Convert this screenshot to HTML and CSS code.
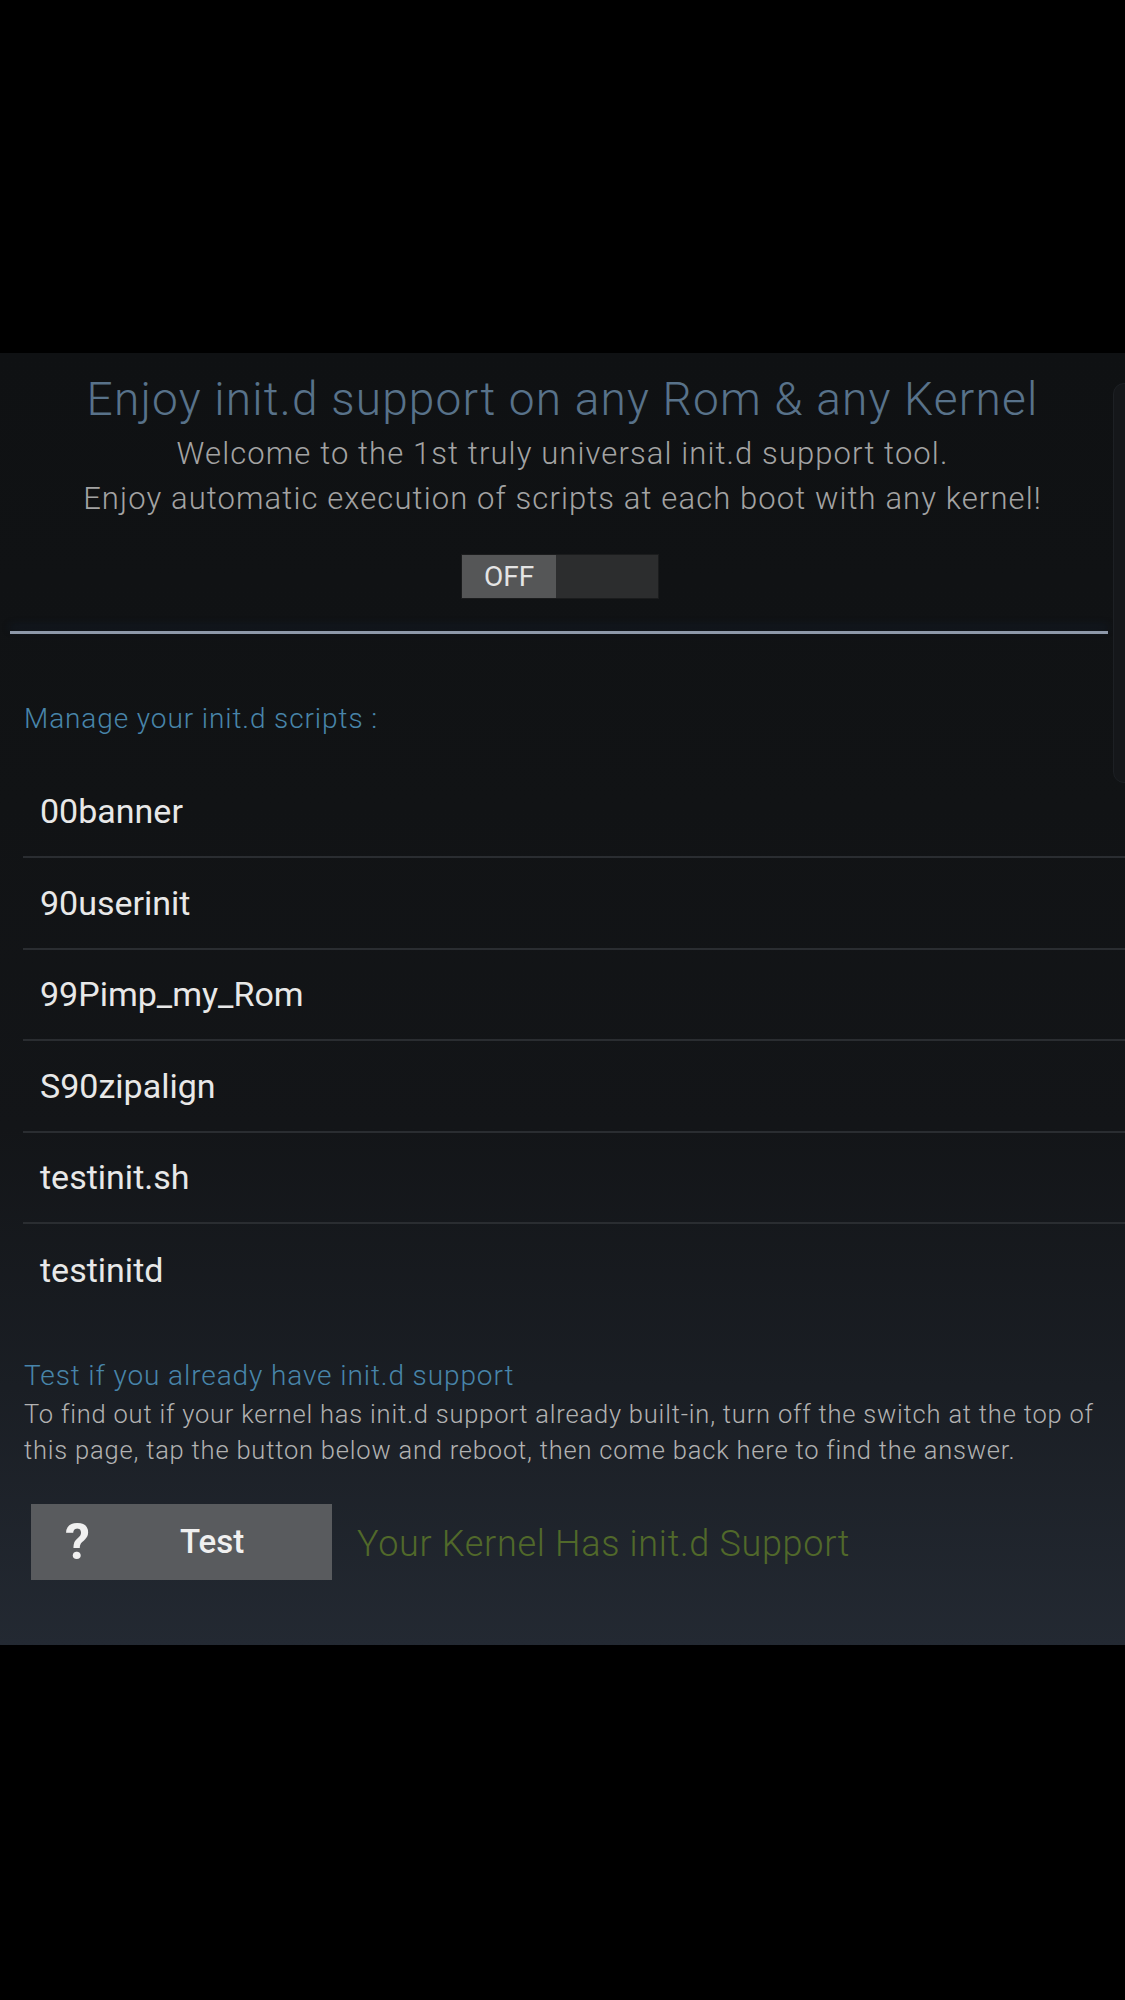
FILE: index.html
```html
<!DOCTYPE html>
<html lang="en">
<head>
<meta charset="utf-8">
<title>Universal init.d</title>
<link rel="stylesheet" href="styles.css">
</head>
<body>
<div class="screen">
  <div class="black-top"></div>
  <main class="app">
    <div class="scroll-edge"></div>
    <section class="intro">
      <h1 class="title">Enjoy init.d support on any Rom &amp; any Kernel</h1>
      <p class="sub">Welcome to the 1st truly universal init.d support tool.</p>
      <p class="sub">Enjoy automatic execution of scripts at each boot with any kernel!</p>
      <div class="toggle-wrap">
        <div class="toggle">
          <span class="thumb">OFF</span>
          <span class="track"></span>
        </div>
      </div>
    </section>
    <div class="divider"></div>
    <h2 class="section-label manage">Manage your init.d scripts :</h2>
    <ul class="scripts">
      <li class="script">00banner</li>
      <li class="script">90userinit</li>
      <li class="script">99Pimp_my_Rom</li>
      <li class="script">S90zipalign</li>
      <li class="script">testinit.sh</li>
      <li class="script">testinitd</li>
    </ul>
    <h2 class="section-label test-label">Test if you already have init.d support</h2>
    <p class="desc">To find out if your kernel has init.d support already built-in, turn off the switch at the top of<br>this page, tap the button below and reboot, then come back here to find the answer.</p>
    <div class="test-row">
      <button class="test-btn"><span class="q">?</span><span class="btn-label">Test</span></button>
      <span class="result">Your Kernel Has init.d Support</span>
    </div>
  </main>
  <div class="black-bottom"></div>
</div>
</body>
</html>
```

FILE: styles.css
```css
* { box-sizing: border-box; }
html, body {
  margin: 0;
  padding: 0;
  background: #000;
}
body {
  font-family: "Roboto", "Noto Sans", "Liberation Sans", sans-serif;
  width: 1125px;
  height: 2000px;
  overflow: hidden;
}
.screen {
  display: flex;
  flex-direction: column;
  height: 2000px;
}
.black-top { height: 353px; background: #000; flex: none; }
.black-bottom { flex: 1; background: #000; }

.app {
  position: relative;
  height: 1292px;
  flex: none;
  background: linear-gradient(180deg, #0f1113 0%, #111315 35%, #131518 60%, #1a1e24 80%, #232932 100%);
  padding-top: 20px;
  overflow: hidden;
}
.scroll-edge {
  position: absolute;
  right: -10px;
  top: 30px;
  width: 22px;
  height: 400px;
  border-radius: 12px;
  background: #15171a;
  border: 1px solid #1d2024;
}

.intro {
  display: flex;
  flex-direction: column;
  align-items: center;
}
.title {
  margin: 0 0 6px;
  font-weight: 300;
  font-size: 46px;
  line-height: 52px;
  color: #58728a;
  letter-spacing: 1.2px;
}
.sub {
  margin: 0;
  font-weight: 300;
  font-size: 31px;
  line-height: 45px;
  color: #a3a3a3;
  letter-spacing: 1.1px;
}
.toggle-wrap {
  margin-top: 34px;
  display: flex;
  justify-content: center;
  padding-right: 5px;
}
.toggle {
  display: flex;
  width: 196px;
  height: 43px;
  background: #2c2d2e;
  box-shadow: 0 0 0 1px #1b1c1d;
}
.thumb {
  width: 94px;
  height: 43px;
  background: #555657;
  color: #e4e4e4;
  font-size: 28px;
  font-weight: 400;
  display: flex;
  align-items: center;
  justify-content: center;
}
.track { flex: 1; }

.divider {
  margin: 33px 17px 0 10px;
  height: 3px;
  background: #8d98a8;
  box-shadow: 0 -5px 8px rgba(20, 45, 80, 0.45);
}

.section-label {
  margin: 0;
  padding-left: 24px;
  font-weight: 300;
  font-size: 28px;
  line-height: 36px;
  color: #4885aa;
  letter-spacing: 0.9px;
}
.manage { margin-top: 66.5px; }

.scripts {
  list-style: none;
  margin: 30px 0 0 23px;
  padding: 0;
}
.script {
  height: 91.5px;
  padding-left: 17px;
  display: flex;
  align-items: center;
  font-size: 34px;
  font-weight: 400;
  color: #e8e8e8;
  border-bottom: 2px solid #2a2d31;
}
.script:last-child { border-bottom: none; }

.test-label { margin-top: 42px; }
.desc {
  margin: 2px 10px 0 24px;
  font-weight: 300;
  font-size: 25.5px;
  line-height: 36px;
  color: #b2b2b2;
  letter-spacing: 0.8px;
  white-space: nowrap;
}

.test-row {
  margin-top: 36px;
  padding-left: 31px;
  display: flex;
  align-items: center;
  gap: 25px;
}
.test-btn {
  width: 301px;
  height: 76px;
  border: none;
  margin: 0;
  padding: 0 0 0 34px;
  background: #595b5e;
  display: flex;
  align-items: center;
  font-family: inherit;
  color: #f0f0f0;
}
.q {
  font-size: 50px;
  font-weight: 700;
  width: 23px;
  line-height: 1;
}
.btn-label {
  margin-left: 92px;
  font-size: 33px;
  font-weight: 500;
}
.result {
  font-weight: 300;
  font-size: 36px;
  color: #51692a;
  margin-top: 4px;
  letter-spacing: 0.7px;
}
```
